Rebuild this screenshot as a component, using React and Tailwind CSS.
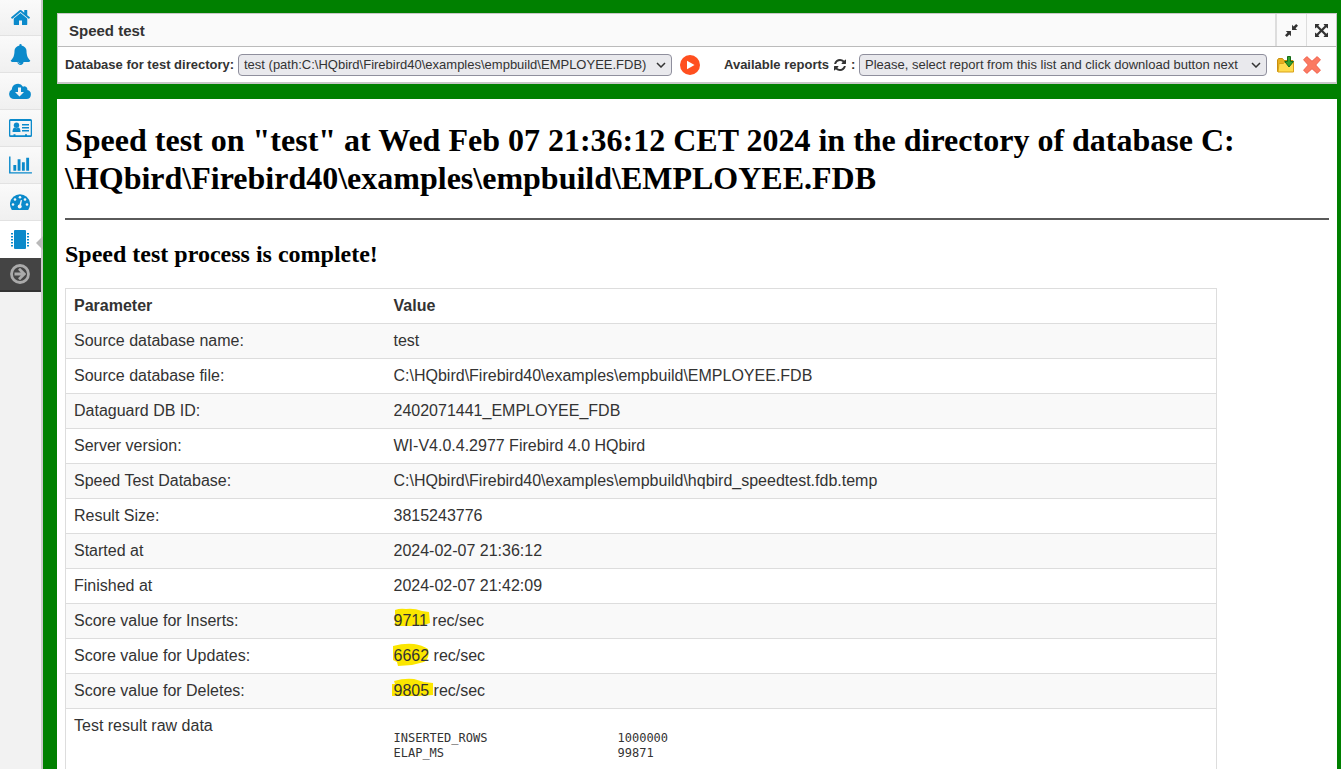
// Speed test page
// - Icon sidebar on the left
// - Toolbar with the database and report pickers
// - Report with the test results
const PARAMS = [
  ['Source database name:', 'test'],
  ['Source database file:', 'C:\\HQbird\\Firebird40\\examples\\empbuild\\EMPLOYEE.FDB'],
  ['Dataguard DB ID:', '2402071441_EMPLOYEE_FDB'],
  ['Server version:', 'WI-V4.0.4.2977 Firebird 4.0 HQbird'],
  ['Speed Test Database:', 'C:\\HQbird\\Firebird40\\examples\\empbuild\\hqbird_speedtest.fdb.temp'],
  ['Result Size:', '3815243776'],
  ['Started at', '2024-02-07 21:36:12'],
  ['Finished at', '2024-02-07 21:42:09'],
];

// Marker strokes are drawn in a 44x24 box that starts 2px left of the number
const SCORES = [
  ['Score value for Inserts:', '9711', 'M3 2 Q8 0 14 1 Q22 0 30 3 L37 4 L38 15 L32 17 L22 18 L3 18 Z'],
  ['Score value for Updates:', '6662', 'M1 3 Q12 0 22 1 Q30 2 36 6 Q38 16 32 19 L20 22 L6 23 L5 19 L1 17 Z'],
  ['Score value for Deletes:', '9805', 'M2 3 Q12 0 22 1 L32 4 L41 5 L41 17 L26 18 L0 18 L0 6 L3 6 Z'],
];

const RAW = [
  ['INSERTED_ROWS', '1000000'],
  ['ELAP_MS', '99871'],
];

function HomeIcon() {
  return (
    <svg viewBox="0 0 1792 1792" className="w-[21px] h-[21px]" fill="currentColor">
      <path d="M1472 992v480q0 26-19 45t-45 19h-384v-384h-256v384h-384q-26 0-45-19t-19-45v-480q0-1 .5-3t.5-3l575-474 575 474q1 2 1 6zm223-69l-62 74q-8 9-21 11h-3q-13 0-21-7l-692-577-692 577q-12 8-24 7-13-2-21-11l-62-74q-8-10-7-23.5t11-21.5l719-599q32-26 76-26t76 26l244 204v-195q0-14 9-23t23-9h192q14 0 23 9t9 23v408l219 182q10 8 11 21.5t-7 23.5z" />
    </svg>
  );
}

function BellIcon() {
  return (
    <svg viewBox="0 0 1792 1792" className="w-[21px] h-[21px]" fill="currentColor">
      <path d="M912 1696q0-16-16-16-59 0-101.500-42.500t-42.500-101.500q0-16-16-16t-16 16q0 73 51.500 124.500t124.500 51.500q16 0 16-16zm816-288q0 52-38 90t-90 38h-448q0 106-75 181t-181 75-181-75-75-181h-448q-52 0-90-38t-38-90q50-42 91-88t85-119.500 74.500-158.500 50-206 19.500-260q0-152 117-282.500t307-158.500q-8-19-8-39 0-40 28-68t68-28 68 28 28 68q0 20-8 39 190 28 307 158.500t117 282.500q0 139 19.500 260t50 206 74.500 158.500 85 119.500 91 88z" />
    </svg>
  );
}

function CloudIcon() {
  return (
    <svg viewBox="0 0 22 16" className="w-[22px] h-4">
      <path fill="currentColor" d="M5 16a5 5 0 0 1-2.200-9.400A6 6 0 0 1 14 3.700a3 3 0 0 1 4.300 3.400A4.500 4.500 0 0 1 17.500 16z" />
      <path fill="#f5f5f5" d="M9 4.500h3V9h3l-4.500 4.500L6 9h3z" />
    </svg>
  );
}

function CardIcon() {
  return (
    <svg viewBox="0 0 23 18" className="w-[23px] h-[18px]" fill="currentColor">
      <path fillRule="evenodd" d="M1.500 0h20A1.500 1.500 0 0 1 23 1.500v15a1.500 1.500 0 0 1-1.500 1.500h-20A1.500 1.500 0 0 1 0 16.500v-15A1.500 1.500 0 0 1 1.500 0zM1.300 2v14.200h3.200v-1h2v1h9.500v-1h2v1h3.700V2z" />
      <circle cx="7.500" cy="6.300" r="2.700" />
      <path d="M5.500 8.500q2 1.500 4 0q2 .5 2 4.500h-8q0-4 2-4.500zM13 5h7v1.400h-7zM13 8h7v1.400h-7zM13 11h7v1.400h-7z" />
    </svg>
  );
}

function ChartIcon() {
  return (
    <svg viewBox="0 0 2048 1792" className="w-[23px] h-5" fill="currentColor">
      <path d="M640 896v512h-256v-512h256zm384-512v1024h-256v-1024h256zm1024 1152v128h-2048v-1536h128v1408h1920zm-640-896v768h-256v-768h256zm384-384v1152h-256v-1152h256z" />
    </svg>
  );
}

function GaugeIcon() {
  return (
    <svg viewBox="0 0 20 16" className="w-5 h-4">
      <path fill="currentColor" d="M1.800 16A10 10 0 1 1 18.200 16z" />
      <g fill="#f5f5f5">
        <circle cx="3" cy="10.500" r="1.300" />
        <circle cx="5" cy="5.500" r="1.300" />
        <circle cx="10" cy="3.300" r="1.300" />
        <circle cx="15" cy="5.500" r="1.300" />
        <circle cx="17" cy="10.500" r="1.300" />
        <circle cx="9.700" cy="12.500" r="2" />
        <path d="M9 12l1.800-6 1.200.3-1.200 6z" />
      </g>
    </svg>
  );
}

function ChipIcon() {
  return (
    <svg viewBox="0 0 18 20" className="w-[18px] h-5" fill="currentColor">
      <rect x="3" y="0" width="12" height="19" rx="1" />
      <path stroke="currentColor" strokeDasharray="1.500 1.500" strokeWidth="2" d="M1 3v15M17 3v15" />
    </svg>
  );
}

function ArrowIcon() {
  return (
    <svg viewBox="0 0 20 20" className="w-5 h-5" fill="none" stroke="currentColor" strokeWidth="2.800">
      <circle cx="10" cy="10" r="8.500" />
      <path d="M4.500 10h9.500M9 4.700l5.300 5.300L9 15.300" />
    </svg>
  );
}

function ShrinkIcon() {
  return (
    <svg viewBox="0 0 12 12" className="w-[13px] h-[13px]" fill="currentColor">
      <path d="M6.500.8v4.700h4.700L9.700 4 12 1.700 10.300 0 8 2.300zM5.500 11.200V6.500H.8L2.300 8 0 10.300 1.700 12 4 9.700z" />
    </svg>
  );
}

function ExpandIcon() {
  return (
    <svg viewBox="0 0 13 13" className="w-[13px] h-[13px]" fill="currentColor">
      <path d="M0 0h4.500L3.300 1.700l3.200 3.200 3.200-3.200L8.500 0H13v4.500l-1.700-1.200-3.200 3.200 3.200 3.200L13 8.500V13H8.500l1.200-1.700-3.200-3.200-3.200 3.200L4.500 13H0V8.500l1.700 1.200 3.200-3.200-3.200-3.200L0 4.500z" />
    </svg>
  );
}

function RefreshIcon() {
  return (
    <svg viewBox="0 0 1792 1792" className="w-[14px] h-[14px]" fill="currentColor">
      <path d="M1639 1056q0 5-1 7-64 268-268 434.500t-478 166.500q-146 0-282.500-55t-243.500-157l-129 129q-19 19-45 19t-45-19-19-45v-448q0-26 19-45t45-19h448q26 0 45 19t19 45-19 45l-137 137q71 66 161 102t187 36q134 0 250-65t186-179q11-17 53-117 8-23 30-23h192q13 0 22.500 9.500t9.500 22.500zm25-800v448q0 26-19 45t-45 19h-448q-26 0-45-19t-19-45 19-45l138-138q-148-137-349-137-134 0-250 65t-186 179q-11 17-53 117-8 23-30 23h-199q-13 0-22.500-9.500t-9.500-22.500v-7q65-268 270-434.500t480-166.500q146 0 284 55.500t245 156.500l130-129q19-19 45-19t45 19 19 45z" />
    </svg>
  );
}

function PlayIcon() {
  return (
    <svg viewBox="0 0 20 20" className="w-5 h-5">
      <circle cx="10" cy="10" r="10" fill="#ff4f1f" />
      <path d="M7 5.700v8.600l7.500-4.300z" fill="#fff" />
    </svg>
  );
}

function FolderIcon() {
  return (
    <svg viewBox="0 0 18 17" className="w-[18px] h-[17px]">
      <path d="M.5 15.500V4l1-1.500h4L7 4.500h9v11z" fill="#e8b020" stroke="#c98f0c" />
      <path d="M1 16l1-8.500h4.500l1.500-1.500h8.500v10z" fill="#ffdc4e" stroke="#d9a21b" />
      <path d="M10.500.5h3v5h3L12 11 7.800 5.500h2.700z" fill="#2fa12f" stroke="#176b17" />
    </svg>
  );
}

function DeleteIcon() {
  return (
    <svg viewBox="0 0 18 18" className="w-[18px] h-[18px]">
      <path d="M3.800.6L9 5.300 14.200.6l3.200 3.200L12.700 9l4.700 5.200-3.200 3.200L9 12.700l-5.200 4.700-3.200-3.200L5.300 9 .6 3.800z" fill="#fb7a62" stroke="#f0604c" strokeLinejoin="round" />
    </svg>
  );
}

const NAV = [
  ['Home', HomeIcon],
  ['Alerts', BellIcon],
  ['Backups', CloudIcon],
  ['License', CardIcon],
  ['Charts', ChartIcon],
  ['Dashboard', GaugeIcon],
];

function Sidebar() {
  return (
    <nav className="w-[43px] shrink-0 border-r-2 border-[#c8c8c8] bg-[#f2f2f2] text-[#0b8acb]">
      {NAV.map(([label, Icon]) => (
        <a key={label} href="#" aria-label={label} className="flex h-[37px] items-center justify-center border-b border-[#e2e2e2] bg-linear-to-b from-[#fafafa] to-[#f0f0f0] pr-px first:h-9">
          <Icon />
        </a>
      ))}
      <a href="#" aria-label="Speed test" className="relative flex h-[37px] items-center justify-center bg-white pr-px">
        <ChipIcon />
        <svg viewBox="0 0 7 14" className="absolute -right-0.5 bottom-2 w-[7px] h-[14px]" fill="#b9b9b9">
          <path d="M7 0v14L0 7z" />
        </svg>
      </a>
      <button aria-label="Expand menu" className="flex h-[34px] w-full items-center justify-center border-b-2 border-[#333] bg-[#444] pr-px text-[#aaa]">
        <ArrowIcon />
      </button>
    </nav>
  );
}

function Picker({ id, className, children }) {
  return (
    <span className={`relative ${className}`}>
      <select id={id} className="h-[22px] w-full appearance-none rounded border border-[#8f8f9d] bg-[#e9e9ed] pl-[5px] pr-5 text-[13px] leading-5 text-[#333]">
        {children}
      </select>
      <svg viewBox="0 0 10 6" className="pointer-events-none absolute right-1.5 top-2 w-[10px] h-[6px]" fill="none" stroke="#333" strokeWidth="1.500">
        <path d="M1 1l4 4 4-4" />
      </svg>
    </span>
  );
}

export default function App() {
  return (
    <div className="flex h-screen overflow-hidden bg-[#008000] font-['Liberation_Sans',Arial,sans-serif] text-[#333]">
      <Sidebar />
      <main className="flex min-w-0 grow flex-col gap-[15px] pl-3.5 pr-1 pt-[13px]">
        <section className="shrink-0 border border-b-2 border-[#c8c8c8] bg-white">
          <header className="flex h-[33px] items-stretch border-b border-[#bbb] bg-[#fafafa]">
            <h3 className="grow pl-[11px] text-[15px] font-bold leading-[33px]">Speed test</h3>
            <button aria-label="Collapse" className="flex w-[31px] items-center justify-center border-l-2 border-[#ddd]"><ShrinkIcon /></button>
            <button aria-label="Full screen" className="flex w-[30px] items-center justify-center border-l border-[#ddd]"><ExpandIcon /></button>
          </header>
          <div className="flex h-[35px] items-center pl-[7px] pr-3 text-[13px] font-bold">
            <label htmlFor="database" className="w-[173px] shrink-0 whitespace-nowrap">Database for test directory:</label>
            <Picker id="database" className="flex w-[434px] font-normal">
              <option>test (path:C:\HQbird\Firebird40\examples\empbuild\EMPLOYEE.FDB)</option>
            </Picker>
            <button aria-label="Run test" className="ml-2"><PlayIcon /></button>
            <label htmlFor="report" className="ml-6 flex w-[135px] shrink-0 items-center gap-1 whitespace-nowrap">Available reports <RefreshIcon /> :</label>
            <Picker id="report" className="flex w-[408px] font-normal">
              <option>Please, select report from this list and click download button next</option>
            </Picker>
            <button aria-label="Download report" className="ml-2.5"><FolderIcon /></button>
            <button aria-label="Delete report" className="ml-2"><DeleteIcon /></button>
          </div>
        </section>

        <article className="grow bg-white px-2 pt-[22px]">
          <h1 className="font-['Liberation_Serif','Times_New_Roman',serif] text-[32px] font-bold leading-[38px] text-black">
            Speed test on "test" at Wed Feb 07 21:36:12 CET 2024 in the directory of database C:<wbr />\HQbird\Firebird40\examples\empbuild\EMPLOYEE.FDB
          </h1>
          <hr className="mt-[21px] border-t-2 border-[#5a5a5a]" />
          <h2 className="mt-5 font-['Liberation_Serif','Times_New_Roman',serif] text-2xl font-bold leading-7 text-black">Speed test process is complete!</h2>
          <table className="mt-5 w-[1152px] max-w-full table-fixed border-collapse border border-[#ddd] text-base leading-[18px]">
            <thead>
              <tr className="border-b border-[#ddd] text-left">
                <th className="w-80 p-2">Parameter</th>
                <th className="p-2">Value</th>
              </tr>
            </thead>
            <tbody>
              {PARAMS.map(([name, value]) => (
                <tr key={name} className="border-b border-[#ddd] odd:bg-[#f9f9f9]">
                  <td className="p-2">{name}</td>
                  <td className="p-2">{value}</td>
                </tr>
              ))}
              {SCORES.map(([name, score, mark]) => (
                <tr key={name} className="border-b border-[#ddd] odd:bg-[#f9f9f9]">
                  <td className="p-2">{name}</td>
                  <td className="p-2">
                    <span className="relative inline-block">
                      <svg viewBox="0 0 44 24" className="absolute -left-0.5 -top-1 w-11 h-6 max-w-none" fill="#fbe600"><path d={mark} /></svg>
                      <span className="relative">{score}</span>
                    </span>{' '}rec/sec
                  </td>
                </tr>
              ))}
              <tr className="align-top">
                <td className="p-2">Test result raw data</td>
                <td className="px-2 pb-5 pt-[22px] font-['DejaVu_Sans_Mono',monospace] text-xs leading-[15px]">
                  {RAW.map(([key, value]) => (
                    <div key={key} className="flex"><span className="w-56">{key}</span><span>{value}</span></div>
                  ))}
                </td>
              </tr>
            </tbody>
          </table>
        </article>
      </main>
    </div>
  );
}
